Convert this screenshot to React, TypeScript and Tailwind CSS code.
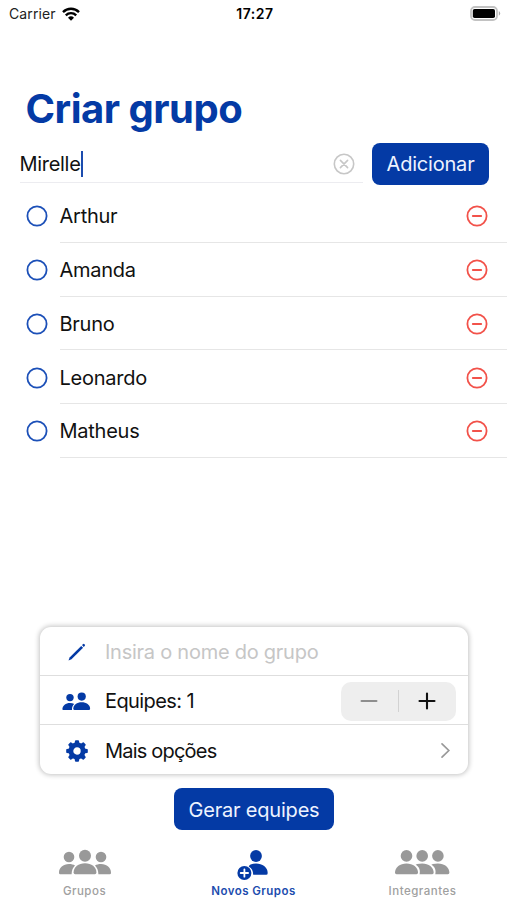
import { useState } from 'react';
import type { ReactNode } from 'react';

const INITIAL_MEMBERS = ['Arthur', 'Amanda', 'Bruno', 'Leonardo', 'Matheus'];

function StatusBar() {
  return (
    <div className="flex h-7 shrink-0 items-center justify-between pl-[9px] pr-[6px] text-black">
      <div className="flex flex-1 items-center gap-[6px] pb-px">
        <span className="text-[14px] tracking-[0.1px] text-[#222]">Carrier</span>
        <svg width="18" height="14" viewBox="0 0 18 14" fill="none" stroke="black" strokeWidth="2.4">
          <path d="M1 5.1a11.4 11.4 0 0 1 16 0" />
          <path d="M3.8 8.3a7.4 7.4 0 0 1 10.4 0" />
          <path d="M9 13.8 6 10.7a4.3 4.3 0 0 1 6 0Z" fill="black" stroke="none" />
        </svg>
      </div>
      <span className="pb-px text-[14px] font-semibold tracking-[0.5px]">17:27</span>
      <div className="flex flex-1 justify-end pb-[2px]">
        <svg width="31" height="15" viewBox="0 0 31 15">
          <rect x="1" y="1" width="26" height="13" rx="4" fill="white" stroke="#c2c2c2" strokeWidth="1.8" />
          <rect x="2.8" y="2.9" width="22.2" height="9.2" rx="1.8" fill="black" />
          <path d="M28.8 5.1a2.6 2.6 0 0 1 0 4.6Z" fill="#aaa" />
        </svg>
      </div>
    </div>
  );
}

function ClearIcon() {
  return (
    <svg width="22" height="22" viewBox="0 0 22 22" fill="none" stroke="#c7c7c7" strokeWidth="1.6" strokeLinecap="round">
      <circle cx="11" cy="11" r="9.7" />
      <path d="m7.4 7.4 7.2 7.2M14.6 7.4l-7.2 7.2" />
    </svg>
  );
}

function RemoveIcon() {
  return (
    <svg width="22" height="22" viewBox="0 0 22 22" fill="none" stroke="#f2524a" strokeWidth="1.8" strokeLinecap="round">
      <circle cx="11" cy="11" r="9.6" />
      <path d="M6.8 11h8.4" />
    </svg>
  );
}

function MemberRow({ name, onRemove }: { name: string; onRemove: () => void }) {
  return (
    <li className="flex h-[53.8px] pl-[26px]">
      <div className="flex w-[34px] items-center pt-[0.5px]">
        <svg width="22" height="22" viewBox="0 0 22 22" fill="none" stroke="#1c50b8" strokeWidth="1.8">
          <circle cx="11" cy="11" r="9.6" />
        </svg>
      </div>
      <div className="flex flex-1 items-center justify-between border-b border-[#e6e6e6] pt-[1.5px] pr-[19.5px]">
        <span className="-ml-[0.5px] text-[20px] tracking-[-0.25px]">{name}</span>
        <button onClick={onRemove}>
          <RemoveIcon />
        </button>
      </div>
    </li>
  );
}

function PencilIcon() {
  return (
    <svg width="18" height="18" viewBox="0 0 18 18" fill="#043aa5">
      <path d="M13.2 2.9 15.1 4.8 3.5 16.2 0.5 17.5 1.6 14.5Z" />
      <path d="m14 2.1.9-.9q.8-.7 1.6 0l.2.2q.7.8 0 1.6l-1 .9Z" />
    </svg>
  );
}

function PairIcon() {
  return (
    <svg width="29" height="19" viewBox="0 0 29 19" fill="#043aa5">
      <circle cx="8" cy="5.6" r="3.7" />
      <path d="M0.4 17.2C0.4 13.5 3.8 10.9 8 10.9q2.4 0 4.3 1c-1.6 1.3-2.5 3.2-2.3 6.1H1.2q-.8 0-.8-.8Z" />
      <circle cx="19.7" cy="4.6" r="4.1" />
      <path d="M11.3 16.8c0-3.9 3.8-6.5 8.4-6.5s8.4 2.6 8.4 6.5q0 1.3-1.2 1.3H12.5q-1.2 0-1.2-1.3Z" />
    </svg>
  );
}

function GearIcon() {
  const teeth = [0, 45, 90, 135, 180, 225, 270, 315];
  return (
    <svg width="22" height="22" viewBox="0 0 22 22">
      <circle cx="11" cy="11" r="6.1" fill="none" stroke="#043aa5" strokeWidth="4.8" />
      {teeth.map((angle) => (
        <path
          key={angle}
          d="M8.4 4 9 .9Q9.1.2 9.8.2h2.4q.7 0 .8.7L13.6 4Z"
          fill="#043aa5"
          transform={`rotate(${angle} 11 11)`}
        />
      ))}
    </svg>
  );
}

function Stepper({ value, onChange }: { value: number; onChange: (value: number) => void }) {
  return (
    <div className="flex h-[39px] w-[115px] items-center rounded-[10px] bg-[#eeeeee]">
      <button className="flex h-full flex-1 items-center justify-center" onClick={() => onChange(Math.max(1, value - 1))}>
        <svg width="18" height="18" viewBox="0 0 18 18" stroke="#8e8e8e" strokeWidth="2" strokeLinecap="round">
          <path d="M1.5 9h15" />
        </svg>
      </button>
      <div className="h-[22px] w-px bg-[#d2d2d2]" />
      <button className="flex h-full flex-1 items-center justify-center" onClick={() => onChange(value + 1)}>
        <svg width="18" height="18" viewBox="0 0 18 18" stroke="#111" strokeWidth="2.1" strokeLinecap="round">
          <path d="M1.5 9h15M9 1.5v15" />
        </svg>
      </button>
    </div>
  );
}

function OptionRow({ icon, children }: { icon: ReactNode; children: ReactNode }) {
  return (
    <div className="flex h-[49px] items-center pt-[2px] text-[20px]">
      <div className="flex w-[65px] items-center justify-center pl-[8px]">{icon}</div>
      <div className="flex flex-1 items-center justify-between">{children}</div>
    </div>
  );
}

function GroupsIcon() {
  return (
    <svg className="ml-px" width="54" height="28" viewBox="0 0 54 28" fill="#999999">
      <circle cx="11" cy="8" r="5.3" />
      <circle cx="43" cy="8" r="5.3" />
      <path d="M1 23.8c0-5.2 4.2-8.7 10-8.7 2.5 0 4.4.5 6 1.5-2 2-3.3 4.6-3.4 8.7H2.2Q1 25.3 1 23.8Z" />
      <path d="M53 23.8c0-5.2-4.2-8.7-10-8.7-2.5 0-4.4.5-6 1.5 2 2 3.3 4.6 3.4 8.7h11.4q1.2 0 1.2-1.5Z" />
      <circle cx="27" cy="6.7" r="6" />
      <path d="M15.6 23.6c0-5.5 4.9-9.3 11.4-9.3s11.4 3.8 11.4 9.3q0 1.7-1.5 1.7H17.1q-1.5 0-1.5-1.7Z" />
    </svg>
  );
}

function NewGroupIcon() {
  return (
    <svg className="mr-[2px]" width="32" height="32" viewBox="0 0 32 32" fill="#043aa5">
      <circle cx="19" cy="7" r="5.9" />
      <path d="M13.6 15.6q2.5-1 5.4-1c6.3 0 11.7 3.7 11.7 9.3q0 1.9-1.6 1.9H16.2c-.1-3.8-1.3-6.5-4.5-8.2q.7-1.4 1.9-2Z" />
      <circle cx="7.4" cy="24" r="7" />
      <path d="M7.4 20.3v7.4M3.7 24h7.4" stroke="white" strokeWidth="1.8" strokeLinecap="round" />
    </svg>
  );
}

function MembersIcon() {
  return (
    <svg className="mr-px" width="56" height="28" viewBox="0 0 56 28" fill="#999999">
      <circle cx="12.5" cy="6.9" r="5.8" />
      <circle cx="28.2" cy="6.9" r="5.8" />
      <circle cx="43.9" cy="6.9" r="5.8" />
      <path d="M1 23.6c0-5.2 5-9.1 11.5-9.1S24 18.4 24 23.6q0 1.7-1.5 1.7h-20Q1 25.3 1 23.6Z" />
      <path d="M23.2 15.1q2.3-.6 5-.6c6.5 0 11.5 3.9 11.5 9.1q0 1.7-1.5 1.7H25.6c.9-4.1-.3-7.4-4-9.5Z" />
      <path d="M38.9 15.1q2.3-.6 5-.6c6.5 0 11.5 3.9 11.5 9.1q0 1.7-1.5 1.7H41.3c.9-4.1-.3-7.4-4-9.5Z" />
    </svg>
  );
}

function Tab({ label, icon, active = false }: { label: string; icon: ReactNode; active?: boolean }) {
  return (
    <button className="flex flex-1 flex-col items-center">
      <div className="flex h-[35px] items-start">{icon}</div>
      <span
        className={
          active
            ? 'text-[11.5px] leading-[14px] font-semibold tracking-[0.45px] text-[#1c4cae]'
            : 'text-[11.5px] leading-[14px] font-medium tracking-[0.5px] text-[#a0a0a0]'
        }
      >
        {label}
      </span>
    </button>
  );
}

export default function App() {
  const [members, setMembers] = useState(INITIAL_MEMBERS);
  const [name, setName] = useState('Mirelle');
  const [teams, setTeams] = useState(1);

  const addMember = () => {
    if (!name) return;
    setMembers([...members, name]);
    setName('');
  };

  return (
    <div className="flex h-[900px] w-[507px] flex-col overflow-hidden bg-white font-['Inter','Liberation_Sans',sans-serif] text-[#111]">
      <StatusBar />

      <h1 className="mt-[57px] h-[48px] shrink-0 pl-[25.5px] text-[40px] leading-[48px] font-bold tracking-[-0.5px] text-[#043aa5]">
        Criar grupo
      </h1>

      {/* Name field */}
      <div className="mt-[10px] flex h-[41px] shrink-0 gap-[9px] pr-[18px] pl-[20px]">
        <div className="flex h-[40px] flex-1 items-center justify-between border-b border-[#ececf0] pt-[2px] pr-[8px]">
          <div className="flex items-center">
            <span className="-ml-[0.5px] text-[20px] tracking-[-0.3px]">{name}</span>
            <span className="h-[26px] w-[2px] bg-[#1c4cae]" />
          </div>
          <button onClick={() => setName('')}>
            <ClearIcon />
          </button>
        </div>
        <button
          className="h-[41.5px] w-[117px] rounded-[8px] bg-[#043aa5] text-[20px] tracking-[-0.2px] text-[#eef3ff]"
          onClick={addMember}
        >
          Adicionar
        </button>
      </div>

      {/* Members */}
      <ul className="mt-[5px] flex-1">
        {members.map((member) => (
          <MemberRow
            key={member}
            name={member}
            onRemove={() => setMembers(members.filter((m) => m !== member))}
          />
        ))}
      </ul>

      {/* Group options */}
      <div className="mx-[40px] w-[428px] shrink-0 divide-y divide-[#dedede] rounded-[11px] bg-white shadow-[0_0_5px_1px_rgba(0,0,0,0.24)]">
        <OptionRow icon={<PencilIcon />}>
          <span className="tracking-[-0.25px] text-[#c6c6c6]">Insira o nome do grupo</span>
        </OptionRow>
        <OptionRow icon={<PairIcon />}>
          <span className="tracking-[-0.6px]">Equipes: {teams}</span>
          <div className="pr-[12.5px]">
            <Stepper value={teams} onChange={setTeams} />
          </div>
        </OptionRow>
        <OptionRow icon={<GearIcon />}>
          <span className="tracking-[-0.8px]">Mais opções</span>
          <svg className="mr-[17px]" width="11" height="17" viewBox="0 0 11 17" fill="none" stroke="#999" strokeWidth="1.7" strokeLinecap="round">
            <path d="m2 1.8 6.8 6.7L2 15.2" />
          </svg>
        </OptionRow>
      </div>

      <button className="mt-[14px] ml-[174px] h-[42px] w-[160px] shrink-0 rounded-[8px] bg-[#043aa5] pt-px text-[20px] tracking-[-0.2px] text-[#eef3ff]">
        Gerar equipes
      </button>

      {/* Tab bar */}
      <nav className="mt-[19px] flex h-[51px] shrink-0">
        <Tab label="Grupos" icon={<GroupsIcon />} />
        <Tab label="Novos Grupos" icon={<NewGroupIcon />} active />
        <Tab label="Integrantes" icon={<MembersIcon />} />
      </nav>
    </div>
  );
}
